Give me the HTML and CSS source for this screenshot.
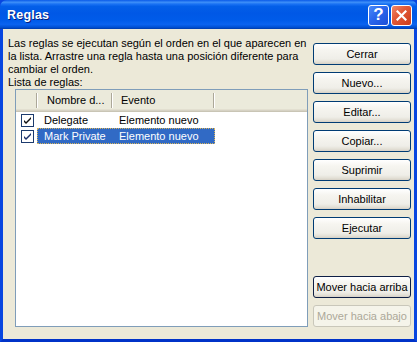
FILE: index.html
```html
<!DOCTYPE html>
<html lang="es">
<head>
  <meta charset="UTF-8" />
  <title>Reglas</title>
  <link rel="stylesheet" href="styles.css">
</head>
<body>
  <div class="window">
    <!-- Title bar -->
    <div class="titlebar">
      <span class="title">Reglas</span>
      <div class="caption-buttons">
        <span class="cap-btn help">?</span>
        <span class="cap-btn close">
          <svg width="11" height="11" viewBox="0 0 11 11">
            <path d="M1.5 1.5 L9.5 9.5 M9.5 1.5 L1.5 9.5" stroke="#ffffff" stroke-width="2.2" stroke-linecap="square" />
          </svg>
        </span>
      </div>
    </div>

    <!-- Dialog body -->
    <div class="client">
      <div class="left">
        <p class="intro">Las reglas se ejecutan según el orden en el que aparecen en<br>la lista. Arrastre una regla hasta una posición diferente para<br>cambiar el orden.</p>
        <div class="list-label">Lista de reglas:</div>

        <div class="listview">
          <div class="lv-header">
            <div class="hcell hc-check"><span class="sep"></span></div>
            <div class="hcell hc-name"><span>Nombre d...</span><span class="sep"></span></div>
            <div class="hcell hc-event"><span>Evento</span><span class="sep"></span></div>
          </div>

          <div class="lv-row">
            <div class="cell-check">
              <svg class="checkbox" width="13" height="13" viewBox="0 0 13 13">
                <rect x="0.5" y="0.5" width="12" height="12" fill="#ffffff" stroke="#1c3b6e" />
                <path d="M3 6 L5 8 L10 3 L10 5 L5 10 L3 8 Z" fill="#111111" />
              </svg>
            </div>
            <div class="cells">
              <span class="cell-name">Delegate</span>
              <span class="cell-event">Elemento nuevo</span>
            </div>
          </div>

          <div class="lv-row">
            <div class="cell-check">
              <svg class="checkbox" width="13" height="13" viewBox="0 0 13 13">
                <rect x="0.5" y="0.5" width="12" height="12" fill="#ffffff" stroke="#1c3b6e" />
                <path d="M3 6 L5 8 L10 3 L10 5 L5 10 L3 8 Z" fill="#1a2f6a" />
              </svg>
            </div>
            <div class="cells selected">
              <span class="cell-name">Mark Private</span>
              <span class="cell-event">Elemento nuevo</span>
            </div>
          </div>
        </div>
      </div>

      <div class="right">
        <button class="btn">Cerrar</button>
        <button class="btn">Nuevo...</button>
        <button class="btn">Editar...</button>
        <button class="btn">Copiar...</button>
        <button class="btn">Suprimir</button>
        <button class="btn">Inhabilitar</button>
        <button class="btn">Ejecutar</button>

        <div class="move-group">
          <button class="btn focused">Mover hacia arriba</button>
          <button class="btn" disabled>Mover hacia abajo</button>
        </div>
      </div>
    </div>
  </div>
</body>
</html>
```

FILE: styles.css
```css
/* Page */
body {
  margin: 0;
  padding: 0;
  background: #ece9d8;
  font-family: 'Liberation Sans', Arial, sans-serif;
  font-size: 11px;
  color: #000000;
}

.window {
  width: 417px;
  height: 342px;
  display: flex;
  flex-direction: column;
  background: #0846e0;
}

/* Title bar */
.titlebar {
  height: 29px;
  flex: none;
  display: flex;
  align-items: center;
  justify-content: space-between;
  padding: 0 5px 0 7px;
  border-radius: 7px 7px 0 0;
  background: linear-gradient(to bottom,
    #0a5ae8 0%, #3d8ff8 8%, #1a72f4 14%, #035fe8 22%,
    #0058e6 45%, #005be9 70%, #0a63f0 84%, #0050d4 94%, #003aa8 100%);
  box-sizing: border-box;
}

.title {
  color: #ffffff;
  font-weight: 700;
  font-size: 12.5px;
  letter-spacing: 0.2px;
  text-shadow: 1px 1px 0 #0a1e7a;
  margin-top: 1px;
}

.caption-buttons {
  display: flex;
  gap: 2px;
  margin-top: 1px;
}

.cap-btn {
  width: 21px;
  height: 21px;
  box-sizing: border-box;
  border: 1px solid #ffffff;
  border-radius: 3px;
  display: flex;
  align-items: center;
  justify-content: center;
}

.help {
  background: linear-gradient(135deg, #4a8af8 0%, #2a66ec 45%, #1b4fd8 100%);
  color: #ffffff;
  font-weight: 700;
  font-size: 17px;
}

.close {
  background: linear-gradient(135deg, #f0896a 0%, #e25a38 40%, #cc3c1a 100%);
}

/* Client area with blue frame */
.client {
  flex: 1;
  display: flex;
  background: #ece9d8;
  border-left: 3px solid #0846e0;
  border-right: 3px solid #0846e0;
  border-bottom: 3px solid #0033c8;
  padding: 8px 3px 12px 5px;
  min-height: 0;
}

.left {
  width: 300px;
  display: flex;
  flex-direction: column;
}

.intro {
  margin: 0;
  line-height: 13px;
  white-space: nowrap;
}

.list-label {
  line-height: 13px;
}

/* List view */
.listview {
  flex: 1;
  margin-left: 7px;
  border: 1px solid #7f9db9;
  background: #ffffff;
}

.lv-header {
  height: 22px;
  display: flex;
  background: #ebeadb;
  box-shadow: inset 0 -1px 0 #c9c5b5, inset 0 -2px 0 #d6d2c4, inset 0 -3px 0 #e2dfd0;
}

.hcell {
  display: flex;
  align-items: center;
  justify-content: space-between;
  box-sizing: border-box;
  padding-bottom: 2px;
}

.hc-check {
  width: 22px;
  justify-content: flex-end;
}

.hc-name {
  width: 75px;
  padding-left: 9px;
}

.hc-event {
  width: 102px;
  padding-left: 8px;
}

.sep {
  width: 1px;
  height: 15px;
  background: #aca899;
  border-right: 1px solid #ffffff;
}

.lv-row {
  height: 16px;
  display: flex;
  align-items: center;
}

.cell-check {
  width: 21px;
  height: 16px;
  padding-left: 5px;
  box-sizing: border-box;
  display: flex;
  align-items: center;
}

.cells {
  display: flex;
  height: 16px;
  line-height: 14px;
  box-sizing: border-box;
  border: 1px solid transparent;
}

.cell-name {
  width: 75px;
  padding-left: 6px;
  box-sizing: border-box;
}

.cell-event {
  width: 101px;
  padding-left: 6px;
  box-sizing: border-box;
}

.selected {
  background: #316ac5;
  color: #ffffff;
  border: 1px dotted #d9b45a;
}

/* Buttons */
.right {
  width: 98px;
  margin-left: 5px;
  padding-top: 6px;
  display: flex;
  flex-direction: column;
  gap: 7px;
}

.btn {
  height: 22px;
  width: 98px;
  padding: 0;
  font-family: 'Liberation Sans', Arial, sans-serif;
  font-size: 11px;
  color: #000000;
  border: 1px solid #003c74;
  border-radius: 3px;
  background: linear-gradient(to bottom, #ffffff 0%, #f6f5f0 30%, #efeee8 75%, #e3e0d6 90%, #d6d0c5 100%);
}

.btn.focused {
  border-color: #0e1f45;
}

.btn:disabled {
  color: #aca899;
  border-color: #c9c7ba;
  background: #f5f4ea;
}

.move-group {
  margin-top: auto;
  display: flex;
  flex-direction: column;
  gap: 7px;
}
```
